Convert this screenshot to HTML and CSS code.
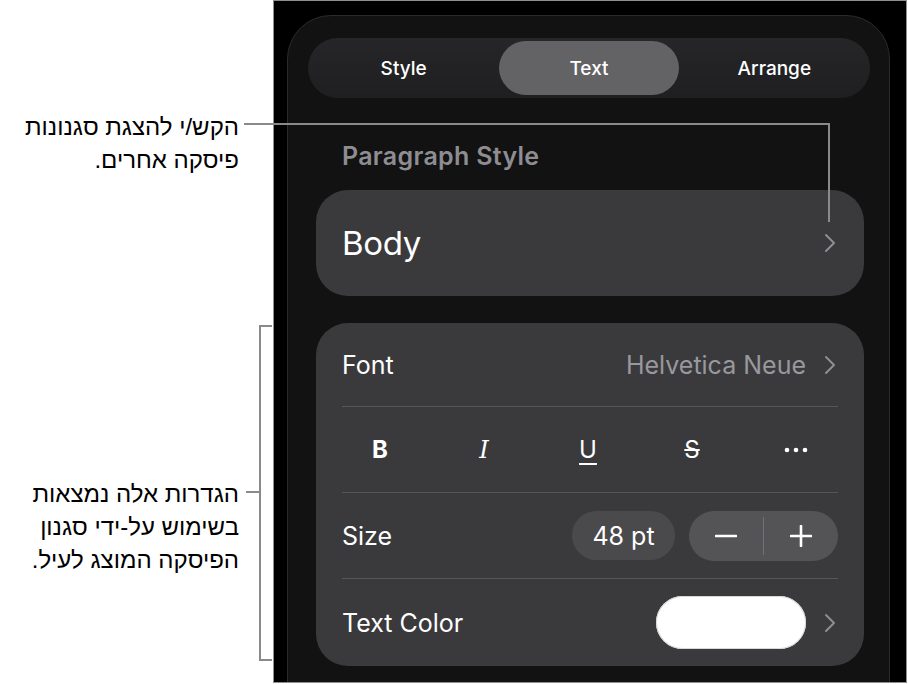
FILE: index.html
```html
<!DOCTYPE html>
<html lang="en">
<head>
<meta charset="utf-8">
<link rel="stylesheet" href="styles.css">
</head>
<body>
<div class="page">
  <div class="notes">
    <p class="callout callout-top" dir="rtl">הקש/י להצגת סגנונות<br>פיסקה אחרים.</p>
    <p class="callout callout-bottom" dir="rtl">הגדרות אלה נמצאות<br>בשימוש על-ידי סגנון<br>הפיסקה המוצג לעיל.</p>
  </div>
  <div class="screen">
    <div class="panel">
      <div class="seg">
        <div class="seg-item">Style</div>
        <div class="seg-item seg-active">Text</div>
        <div class="seg-item">Arrange</div>
      </div>
      <div class="section-label">Paragraph Style</div>
      <div class="card body-card">
        <span class="body-text">Body</span>
        <svg class="chev" width="12" height="20" viewBox="0 0 12 20"><path d="M2 2 L10 10 L2 18" fill="none" stroke="#8e8e93" stroke-width="2" stroke-linecap="round" stroke-linejoin="round"/></svg>
      </div>
      <div class="card opts">
        <div class="row row-font">
          <span class="lbl">Font</span>
          <span class="right">
            <span class="val">Helvetica Neue</span>
            <svg class="chev" width="12" height="20" viewBox="0 0 12 20"><path d="M2 2 L10 10 L2 18" fill="none" stroke="#8e8e93" stroke-width="2" stroke-linecap="round" stroke-linejoin="round"/></svg>
          </span>
        </div>
        <div class="sep"></div>
        <div class="row row-styles">
          <span class="st st-b">B</span>
          <span class="st st-i">I</span>
          <span class="st st-u">U</span>
          <span class="st st-s">S</span>
          <span class="st st-more"><svg width="24" height="6" viewBox="0 0 24 6"><circle cx="3" cy="3" r="2.3" fill="#fff"/><circle cx="12" cy="3" r="2.3" fill="#fff"/><circle cx="21" cy="3" r="2.3" fill="#fff"/></svg></span>
        </div>
        <div class="sep"></div>
        <div class="row row-size">
          <span class="lbl">Size</span>
          <span class="right">
            <span class="pt">48 pt</span>
            <span class="stepper">
              <span class="step"><svg width="22" height="22" viewBox="0 0 22 22"><path d="M1 11 H21" stroke="#fff" stroke-width="2.6" stroke-linecap="round"/></svg></span>
              <span class="step-div"></span>
              <span class="step"><svg width="22" height="22" viewBox="0 0 22 22"><path d="M1 11 H21 M11 1 V21" stroke="#fff" stroke-width="2.6" stroke-linecap="round"/></svg></span>
            </span>
          </span>
        </div>
        <div class="sep"></div>
        <div class="row row-color">
          <span class="lbl">Text Color</span>
          <span class="right">
            <span class="swatch"></span>
            <svg class="chev" width="12" height="20" viewBox="0 0 12 20"><path d="M2 2 L10 10 L2 18" fill="none" stroke="#8e8e93" stroke-width="2" stroke-linecap="round" stroke-linejoin="round"/></svg>
          </span>
        </div>
      </div>
    </div>
  </div>
  <div class="leader leader-h"></div>
  <div class="leader leader-v"></div>
  <div class="bracket"></div>
  <div class="leader bracket-tick"></div>
</div>
</body>
</html>
```

FILE: styles.css
```css
html, body {
  margin: 0;
  padding: 0;
  background: #ffffff;
}

.page {
  position: relative;
  display: flex;
  width: 908px;
  height: 684px;
  overflow: hidden;
}

.notes {
  width: 273px;
  flex: none;
}

.callout {
  margin: 0;
  padding-right: 34px;
  text-align: right;
  font-family: "Liberation Sans", "DejaVu Sans", sans-serif;
  font-size: 24px;
  line-height: 33px;
  color: #000;
}

.callout-top {
  margin-top: 110px;
}

.callout-bottom {
  margin-top: 301px;
}

.screen {
  width: 634px;
  height: 683px;
  box-sizing: border-box;
  border: 1px solid #8f8f8f;
  background: #000;
  overflow: hidden;
  flex: none;
}

.panel {
  margin: 14px 0 0 13px;
  width: 603px;
  height: 720px;
  box-sizing: border-box;
  background: #121212;
  border: 1px solid #2b2b2d;
  border-radius: 44px;
  padding: 22px 19px 0 20px;
  font-family: Inter, "Liberation Sans", sans-serif;
  color: #fff;
}

.seg {
  height: 60px;
  box-sizing: border-box;
  border-radius: 30px;
  background: linear-gradient(180deg, #262628, #1f1f21);
  display: grid;
  grid-template-columns: repeat(3, 1fr);
  padding: 3px;
}

.seg-item {
  display: flex;
  align-items: center;
  justify-content: center;
  font-size: 19px;
  font-weight: 500;
  color: #fff;
}

.seg-active {
  background: #636366;
  border-radius: 27px;
  margin: 0 3px;
}

.section-label {
  margin-top: 45px;
  padding-left: 34px;
  font-size: 25px;
  line-height: 27px;
  font-weight: 600;
  color: #8d8d92;
  letter-spacing: 0.3px;
}

.card {
  background: #3a3a3c;
  border-radius: 32px;
  margin: 0 6px 0 8px;
}

.body-card {
  margin-top: 20px;
  height: 106px;
  box-sizing: border-box;
  padding: 0 28px 0 26px;
  display: flex;
  align-items: center;
  justify-content: space-between;
}

.body-text {
  font-size: 33px;
  font-weight: 400;
  letter-spacing: -0.3px;
}

.chev {
  display: block;
  flex: none;
}

.opts {
  margin-top: 27px;
  padding: 0 26px;
}

.row {
  display: flex;
  align-items: center;
  justify-content: space-between;
  height: 85px;
}

.row-font {
  height: 83px;
}

.row-color {
  height: 87px;
}

.sep {
  height: 1px;
  background: #56565a;
}

.lbl {
  font-size: 25px;
}

.right {
  display: flex;
  align-items: center;
}

.val {
  font-size: 25px;
  color: #98989d;
  margin-right: 18px;
}

.row-font .chev,
.row-color .chev {
  margin-right: 2px;
}

.row-styles {
  display: grid;
  grid-template-columns: repeat(5, 104px);
  margin-left: -14px;
  justify-items: center;
}

.st {
  font-size: 24px;
  color: #fff;
  line-height: 30px;
  display: flex;
  align-items: center;
  justify-content: center;
  height: 30px;
}

.st-b {
  font-weight: 700;
}

.st-i {
  font-family: "DejaVu Serif", "Liberation Serif", serif;
  font-style: italic;
  font-size: 24px;
  font-weight: 300;
}

.st-u {
  text-decoration: underline;
  text-decoration-thickness: 2px;
  text-underline-offset: 5px;
  font-weight: 400;
}

.st-s {
  text-decoration: line-through;
  text-decoration-thickness: 1.5px;
  font-weight: 400;
}

.pt {
  width: 103px;
  height: 49px;
  border-radius: 25px;
  background: #4a4a4c;
  display: flex;
  align-items: center;
  justify-content: center;
  font-size: 25px;
  margin-right: 14px;
}

.stepper {
  width: 149px;
  height: 50px;
  border-radius: 25px;
  background: #545456;
  display: flex;
  align-items: center;
}

.step {
  flex: 1;
  display: flex;
  align-items: center;
  justify-content: center;
}

.step-div {
  width: 1px;
  height: 38px;
  background: #727276;
}

.swatch {
  width: 150px;
  height: 53px;
  border-radius: 27px;
  background: #fff;
  box-shadow: inset 0 0 0 1px #d8d8d8;
  margin-right: 18px;
}

.leader {
  position: absolute;
  background: #8a8a8a;
}

.leader-h {
  left: 244px;
  top: 123px;
  width: 586px;
  height: 2px;
}

.leader-v {
  left: 828px;
  top: 123px;
  width: 2px;
  height: 99px;
}

.bracket {
  position: absolute;
  left: 259px;
  top: 325px;
  width: 11px;
  height: 332px;
  border: 2px solid #8a8a8a;
  border-right: none;
}

.bracket-tick {
  left: 246px;
  top: 491px;
  width: 14px;
  height: 2px;
}
```
